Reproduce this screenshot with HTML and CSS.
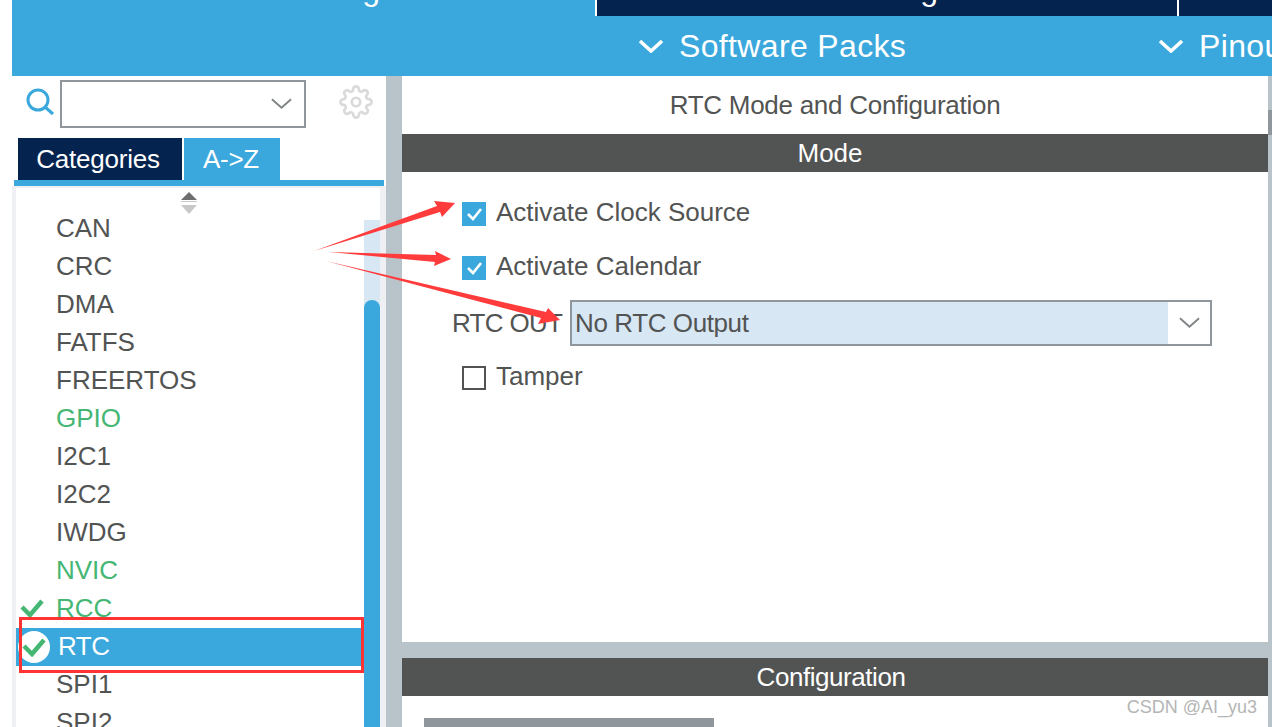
FILE: index.html
```html
<!DOCTYPE html>
<html lang="en">
<head>
<meta charset="utf-8">
<title>RTC Mode and Configuration</title>
<link rel="stylesheet" href="styles.css">
</head>
<body>
<div class="app">
  <header class="top">
    <div class="tabs">
      <div class="tab tab-active"><span class="tab-label tab-label-1">Pinout &amp; Configuration</span></div>
      <div class="tab tab-dark"><span class="tab-label tab-label-2">Clock Configuration</span></div>
      <div class="tab tab-dark tab-last"></div>
    </div>
    <nav class="menu">
      <div class="menu-item menu-item-packs">
        <svg class="menu-chev" viewBox="0 0 26 14"><path d="M2 2l11 10L24 2"/></svg>
        <span>Software Packs</span>
      </div>
      <div class="menu-item">
        <svg class="menu-chev" viewBox="0 0 26 14"><path d="M2 2l11 10L24 2"/></svg>
        <span>Pinout</span>
      </div>
    </nav>
  </header>
  <main class="main">
    <aside class="side">
      <div class="search">
        <svg class="search-icon" viewBox="0 0 28 28"><circle cx="12" cy="12" r="10"/><path d="M19 19l8 7"/></svg>
        <div class="search-box">
          <svg class="chev" viewBox="0 0 22 12"><path d="M1 1l10 9 10-9"/></svg>
        </div>
        <svg class="gear" viewBox="0 0 24 24"><circle cx="12" cy="12" r="3"/><path d="M19.4 15a1.65 1.65 0 0 0 .33 1.82l.06.06a2 2 0 0 1 0 2.83 2 2 0 0 1-2.83 0l-.06-.06a1.65 1.65 0 0 0-1.82-.33 1.65 1.65 0 0 0-1 1.51V21a2 2 0 0 1-2 2 2 2 0 0 1-2-2v-.09A1.65 1.65 0 0 0 9 19.4a1.65 1.65 0 0 0-1.82.33l-.06.06a2 2 0 0 1-2.83 0 2 2 0 0 1 0-2.83l.06-.06a1.65 1.65 0 0 0 .33-1.82 1.65 1.65 0 0 0-1.51-1H3a2 2 0 0 1-2-2 2 2 0 0 1 2-2h.09A1.65 1.65 0 0 0 4.6 9a1.65 1.65 0 0 0-.33-1.82l-.06-.06a2 2 0 0 1 0-2.83 2 2 0 0 1 2.83 0l.06.06a1.65 1.65 0 0 0 1.82.33H9a1.65 1.65 0 0 0 1-1.51V3a2 2 0 0 1 2-2 2 2 0 0 1 2 2v.09a1.65 1.65 0 0 0 1 1.51 1.65 1.65 0 0 0 1.82-.33l.06-.06a2 2 0 0 1 2.83 0 2 2 0 0 1 0 2.83l-.06.06a1.65 1.65 0 0 0-.33 1.82V9a1.65 1.65 0 0 0 1.51 1H21a2 2 0 0 1 2 2 2 2 0 0 1-2 2h-.09a1.65 1.65 0 0 0-1.51 1z"/></svg>
      </div>
      <div class="side-tabs">
        <div class="side-tab side-tab-dark">Categories</div>
        <div class="side-tab side-tab-blue">A-&gt;Z</div>
      </div>
      <div class="side-rule"></div>
      <div class="list-frame">
        <div class="list-panel">
          <div class="spinner">
            <svg viewBox="0 0 18 22"><path class="up" d="M9 0l8 8H1z"/><path class="up-soft" d="M1 9h16v1H1z"/><path class="down" d="M1 13h16l-8 9z"/></svg>
          </div>
          <div class="list-body">
            <ul class="list">
              <li class="row">CAN</li>
              <li class="row">CRC</li>
              <li class="row">DMA</li>
              <li class="row">FATFS</li>
              <li class="row">FREERTOS</li>
              <li class="row row-green">GPIO</li>
              <li class="row">I2C1</li>
              <li class="row">I2C2</li>
              <li class="row">IWDG</li>
              <li class="row row-green">NVIC</li>
              <li class="row row-green row-check">
                <svg class="check" viewBox="0 0 26 20"><path d="M3 9l8 8L23 3"/></svg>RCC
              </li>
              <li class="row row-selected">
                <span class="check-disc"><svg viewBox="0 0 26 20"><path d="M3 9l8 8L23 3"/></svg></span>RTC
              </li>
              <li class="row">SPI1</li>
              <li class="row">SPI2</li>
            </ul>
            <div class="scroll"><div class="scroll-thumb"></div></div>
          </div>
        </div>
      </div>
    </aside>
    <section class="content">
      <div class="mode-panel">
        <h1 class="title">RTC Mode and Configuration</h1>
        <h2 class="bar">Mode</h2>
        <div class="form">
          <label class="field field-clock"><span class="box box-on"><svg viewBox="0 0 24 24"><path d="M6 12l5 5 8-10"/></svg></span>Activate Clock Source</label>
          <label class="field field-cal"><span class="box box-on"><svg viewBox="0 0 24 24"><path d="M6 12l5 5 8-10"/></svg></span>Activate Calendar</label>
          <div class="select-row">
            <span class="select-label">RTC OUT</span>
            <div class="select">
              <span class="select-value">No RTC Output</span>
              <span class="select-btn"><svg class="chev" viewBox="0 0 22 12"><path d="M1 1l10 9 10-9"/></svg></span>
            </div>
          </div>
          <label class="field field-tamper"><span class="box"></span>Tamper</label>
        </div>
      </div>
      <div class="config-panel">
        <h2 class="bar bar-config">Configuration</h2>
        <div class="config-body"><div class="config-tab"></div></div>
      </div>
    </section>
    <div class="edge"><div class="edge-mark"></div></div>
  </main>
</div>
<div class="red-box"></div>
<svg class="arrows" viewBox="0 0 1272 727">
  <path d="M314 251L437 206L434 201L455 203L442 217L440 212z"/>
  <path d="M329 252L436 255L435 251L451 259L434 266L435 262z"/>
  <path d="M326 261L546 312L548 308L560 320L538 324L541 318z"/>
</svg>
<div class="watermark">CSDN @AI_yu3</div>
</body>
</html>
```
FILE: styles.css
```css
* { box-sizing: border-box; }
html, body { margin: 0; padding: 0; background: #fff; }
body {
  width: 1272px;
  height: 727px;
  overflow: hidden;
  position: relative;
  font-family: "Liberation Sans", Arial, sans-serif;
  color: #525453;
}
.app { margin-left: 12px; width: 1260px; height: 727px; display: flex; flex-direction: column; }

.top { height: 76px; flex: none; background: #3aa8dc; }
.tabs { height: 16px; display: flex; overflow: hidden; }
.tab { height: 16px; overflow: hidden; flex: none; font-size: 32px; color: #fff; line-height: 36px; }
.tab-active { width: 583px; }
.tab-dark { background: #04234e; border-left: 2px solid #fff; }
.tab:nth-child(2) { width: 582px; }
.tab-last { flex: 1; }
.tab-label { display: block; margin-top: -29px; white-space: nowrap; text-align: right; }
.tab-label-1 { width: 466px; }
.tab-label-2 { width: 439px; }

.menu { height: 60px; display: flex; align-items: center; padding-left: 626px; color: #fff; font-size: 32px; letter-spacing: 0.35px; }
.menu-item { display: flex; align-items: center; gap: 15px; white-space: nowrap; }
.menu-item-packs { width: 520px; flex: none; }
.menu-chev { width: 26px; height: 14px; fill: none; stroke: #fff; stroke-width: 3.6; }

.main { flex: 1; display: flex; min-height: 0; background: #b8c4ca; }
.side { width: 374px; flex: none; background: #fff; display: flex; flex-direction: column; }
.search { height: 62px; display: flex; align-items: flex-start; position: relative; padding: 4px 0 0 14px; }
.search-icon { width: 28px; height: 28px; margin: 8px 6px 0 0; fill: none; stroke: #3aa8dc; stroke-width: 3; }
.search-box { width: 246px; height: 48px; border: 2px solid #8f969c; display: flex; align-items: center; justify-content: flex-end; padding-right: 12px; }
.chev { width: 21px; height: 12px; fill: none; stroke: #7f8487; stroke-width: 2; }
.gear { width: 34px; height: 34px; margin: 5px 0 0 33px; fill: none; stroke: #dadada; stroke-width: 1.9; }
.side-tabs { height: 42px; display: flex; gap: 2px; padding-left: 6px; flex: none; }
.side-tab { height: 42px; display: flex; align-items: center; justify-content: center; color: #fff; font-size: 26px; }
.side-tab-dark { width: 164px; background: #04234e; padding-right: 4px; letter-spacing: -0.2px; }
.side-tab-blue { width: 96px; background: #3aa8dc; padding-right: 2px; letter-spacing: -0.3px; }
.side-rule { height: 6px; flex: none; margin: 0 2px; background: #3aa8dc; }
.list-frame { flex: 1; min-height: 0; background: #eef0f3; padding: 2px 6px 0 4px; }
.list-panel { height: 100%; background: #fff; display: flex; flex-direction: column; }
.spinner { height: 30px; flex: none; display: flex; justify-content: center; padding: 4px 18px 0 0; }
.spinner svg { width: 18px; height: 22px; }
.up { fill: #6e6e6e; }
.up-soft { fill: #c9c9c9; }
.down { fill: #c9c9c9; }
.list-body { flex: 1; min-height: 0; display: flex; overflow: hidden; }
.list { flex: 1; min-width: 0; list-style: none; margin: -8px 0 0; padding: 0; }
.row { height: 38px; display: flex; align-items: center; padding: 0 0 2px 40px; font-size: 26px; position: relative; }
.row-green { color: #45b674; }
.check { position: absolute; left: 3px; top: 8px; width: 26px; height: 20px; fill: none; stroke: #45b674; stroke-width: 4.5; }
.row-selected { background: #3aa8dc; color: #fff; padding-left: 42px; letter-spacing: -0.5px; }
.check-disc { position: absolute; left: 2px; top: 3px; width: 32px; height: 32px; border-radius: 50%; background: #fff; display: flex; align-items: center; justify-content: center; }
.check-disc svg { width: 26px; height: 20px; fill: none; stroke: #45b674; stroke-width: 4.5; }
.scroll { width: 16px; flex: none; background: #d8e7f4; padding-top: 80px; margin-top: 2px; }
.scroll-thumb { height: 100%; background: #3aa8dc; border-radius: 8px 8px 0 0; }

.content { width: 866px; flex: none; margin-left: 16px; display: flex; flex-direction: column; gap: 16px; }
.mode-panel { height: 566px; flex: none; background: #fff; }
.title { margin: 0; height: 58px; display: flex; align-items: center; justify-content: center; font-size: 26px; font-weight: 400; letter-spacing: -0.27px; }
.bar { margin: 0; height: 38px; background: #525453; color: #fff; font-size: 26px; font-weight: 400; display: flex; align-items: center; justify-content: center; padding: 0 10px 0 0; }
.bar-config { letter-spacing: -0.45px; padding-right: 8px; }
.form { display: flex; flex-direction: column; align-items: flex-start; padding: 30px 0 0 60px; }
.field { display: flex; align-items: center; gap: 10px; font-size: 26px; height: 24px; padding-bottom: 3px; white-space: nowrap; }
.field-cal { margin-top: 30px; }
.field-tamper { margin-top: 20px; }
.box { width: 24px; height: 24px; border: 2px solid #525453; display: block; flex: none; align-self: flex-start; }
.box-on { background: #3aa8dc; border: 0; }
.box svg { display: block; width: 24px; height: 24px; fill: none; stroke: #fff; stroke-width: 2.6; }
.select-row { display: flex; align-items: center; margin: 20px 0 0 -10px; }
.select-label { width: 118px; flex: none; font-size: 26px; white-space: nowrap; letter-spacing: -0.7px; }
.select { width: 642px; height: 46px; border: 2px solid #8f969c; display: flex; }
.select-value { flex: 1; background: #d8e7f4; font-size: 26px; display: flex; align-items: center; padding-left: 3px; letter-spacing: -0.4px; }
.select-btn { width: 42px; flex: none; display: flex; align-items: center; justify-content: center; }
.config-panel { flex: 1; background: #fff; min-height: 0; overflow: hidden; }
.config-body { padding: 22px 0 0 22px; }
.config-tab { width: 290px; height: 20px; background: #8f969c; }
.edge { flex: 1; padding-top: 34px; }
.edge-mark { height: 25px; background: #8f969c; }

.red-box { position: absolute; left: 19px; top: 617px; width: 345px; height: 56px; border: 3px solid #ff3333; }
.arrows { position: absolute; left: 0; top: 0; width: 1272px; height: 727px; fill: #ff3b3b; pointer-events: none; }
.watermark { position: absolute; right: 15px; top: 696px; font-size: 18px; color: #b5b5b5; line-height: 22px; white-space: nowrap; }
```
